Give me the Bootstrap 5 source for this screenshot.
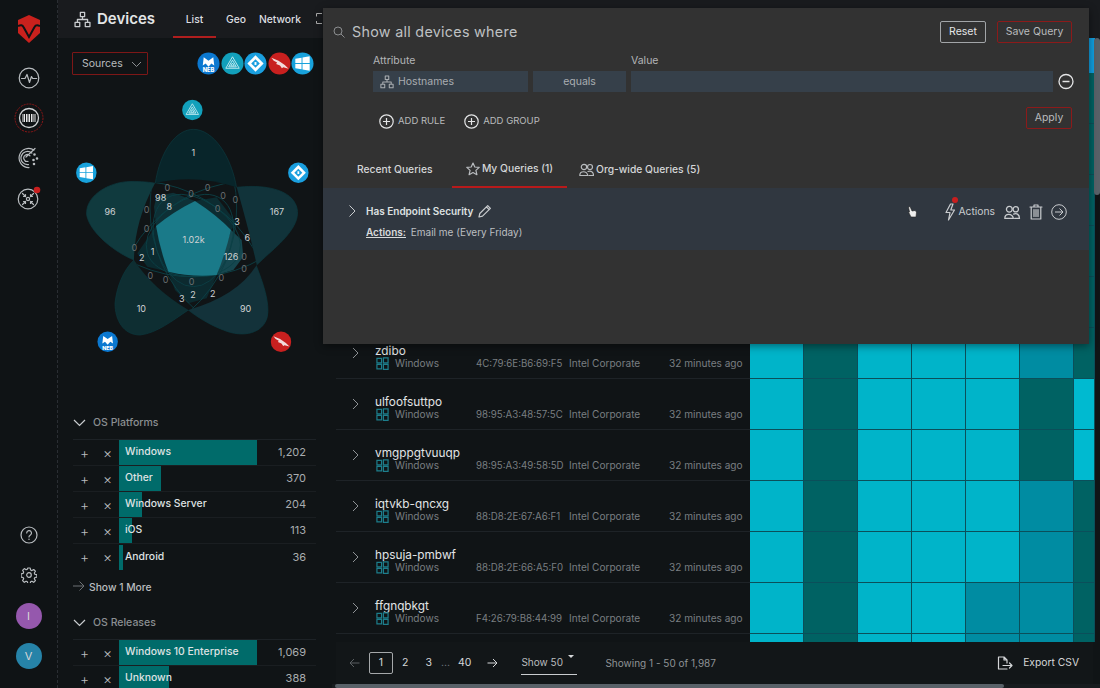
<!DOCTYPE html>
<html lang="en">
<head>
<meta charset="utf-8">
<title>Devices</title>
<link href="https://cdn.jsdelivr.net/npm/bootstrap@5.3.0/dist/css/bootstrap.min.css" rel="stylesheet">
<style>
html,body{height:688px;overflow:hidden;background:#101416;}
body{font-family:Inter,"Liberation Sans",sans-serif;font-size:11px;color:#c9cccf;}
.app{position:relative;width:1100px;height:688px;overflow:hidden;}
svg{display:block;flex:none;}
.ic{fill:none;stroke:currentColor;stroke-width:1.2;stroke-linecap:round;stroke-linejoin:round;}
.rail{width:58px;height:688px;background:#0f1315;border-right:1px dashed #2a2e33;padding-top:15px;flex:none;}
.rail-ic{height:40px;color:#b9bdc0;}
.rail-top{height:28px;margin-bottom:15px;}
.ava{width:26px;height:26px;border-radius:50%;color:#d8d8d8;font-size:11px;margin-top:14px;}
.ava-i{background:#9558ad;margin-top:8px;}
.ava-v{background:#2683a8;margin-bottom:19px;}
.side{width:274px;height:688px;flex:none;}
.side>*{flex:none;}
.topbar{height:38px;background:#191b1e;flex:none;}
.side-head{height:39px;}
.side-title{font-size:15px;font-weight:600;color:#e3e5e6;margin-left:6px;}
.tab-link{font-size:10.3px;font-weight:500;color:#dcdee0;height:38px;line-height:39px;text-align:center;}
.tab-on{width:43px;border-bottom:2px solid #b01e1e;margin-left:18px;margin-right:10px;}
.tab-gap{margin-left:13px;}
.srcbar{height:52px;padding:14px 18px 0 14px;}
.btn.srcbtn{width:76px;height:23px;border:1px solid #7d1717;border-radius:1px;color:#b9bcbf;font-size:10.5px;padding:1px 0 0 9px;}
.srcdot{width:23px;height:23px;margin-left:.5px;}
.venn{margin-left:2px;}
.venn text{font-family:Inter,"Liberation Sans",sans-serif;font-size:27px;fill:#d0d3d5;text-anchor:middle;}
.venn text.z{fill:#686d70;}
.spacer-a{height:44px;}
.sect{height:18px;padding-left:15px;color:#8b8f92;font-size:10.5px;font-weight:500;}
.sect svg{color:#c9cccf;margin-right:7px;}
.flist{margin:7px 16px 0 15px;border-top:1px solid #1d2226;}
.frow{height:26px;border-bottom:1px solid #1a1e21;}
.fbtn{width:23px;text-align:center;color:#b9bcbf;font-size:14px;line-height:24px;font-weight:300;}
.fbar{position:relative;flex:1;height:25px;}
.fill-bar{position:absolute;left:0;top:0;bottom:0;background:#006b6a;}
.fname{position:relative;padding-left:6px;line-height:23px;font-size:10.4px;color:#dfe2e3;font-weight:500;}
.fcount{width:49px;padding-right:10px;text-align:right;color:#a9adb0;font-size:11px;}
.more{padding:10px 0 0 15px;height:44px;color:#b9bcbf;font-size:10.3px;font-weight:500;}
.more svg{color:#6d7174;margin-right:4px;}
.main{width:768px;height:688px;flex:none;}
.tablewrap{height:604px;overflow:hidden;padding-left:4px;}
.trow{display:grid;grid-template-columns:414px 54px 54px 54px 54px 54px 54px 21px;height:51px;}
.trow.thead{height:35px;grid-template-columns:753px 6px;}
.thead i{background:#119fe0;grid-column:2;}
.tinfo{border-bottom:1px solid #1e2327;position:relative;padding:16px 0 0 39px;}
.chev{position:absolute;left:16px;top:19px;color:#8f9396;}
.hname{font-size:11.8px;line-height:14px;color:#e2e4e6;font-weight:400;}
.hsub{font-size:10.1px;line-height:13px;color:#797e81;margin-top:-1px;}
.hos{width:101px;}
.hos svg{margin:0 6px 0 1px;color:#1d7e8c;}
.hmac{width:93px;white-space:nowrap;font-size:9.7px;}
.hven{width:100px;white-space:nowrap;}
.cell{border-right:1px solid #0b4f5a;border-bottom:1px solid #0b4f5a;}
.hl{background:#00b4c9;}
.hd{background:#006263;}
.hm{background:#008ca2;}
.hb{background:#00bad0;}
.pager{height:42px;background:#121618;margin-left:4px;width:757px;padding-left:13px;color:#d5d7d9;font-size:10.5px;flex:none;}
.pg-on{width:24px;height:22px;border:1px solid #a5a8aa;border-radius:2px;margin-left:9px;}
.pg-n{margin-left:9px;}
.pg-ar{color:#5a5f62;}
.pg-sel{width:56px;height:23px;border-bottom:1px solid #c9cccf;margin-left:23px;color:#b9bcbf;font-size:10px;position:relative;}
.caret-mini{position:absolute;right:3px;top:3px;width:0;height:0;border:3px solid transparent;border-top-color:#d5d7d9;}
.pg-info{margin-left:28px;color:#8f9396;font-size:10px;}
.pg-exp{font-size:10.3px;margin-right:14px;}
.pg-exp svg{margin-right:10px;}
.hscroll-track{height:4px;background:#171b1e;padding-left:3px;flex:none;}
.hscroll{width:669px;height:4px;background:#596168;border-radius:2px;}
.vscroll{position:absolute;left:1094px;top:38px;width:6px;height:157px;background:#596168;border-radius:3px;}
.qpanel{position:absolute;left:323px;top:8px;width:766px;height:336px;background:#323232;box-shadow:0 2px 8px rgba(0,0,0,.45);}
.qhead{height:44px;padding:4px 17px 0 10px;flex:none;}
.qtitle{font-size:14.3px;color:#bfc1c3;margin-left:7px;letter-spacing:.3px;}
.btn.q-reset{width:46px;height:22px;border:1px solid #a2a5a8;border-radius:2px;color:#e4e5e6;font-size:10.5px;padding:0;}
.btn.q-save{height:22px;border:1px solid #8c1a1a;border-radius:2px;color:#b9bbbd;font-size:10.5px;padding:0;}
.q-s1{width:75px;margin-left:11px;}
.q-s2{width:46px;}
.qlabels{padding-left:50px;height:19px;color:#b3b5b7;font-size:10.5px;padding-top:1px;}
.qlab1{width:258px;}
.qfields{padding-left:50px;height:21px;gap:5px;}
.qf{height:21px;background:#36404a;color:#a9adb1;font-size:10.5px;}
.qf1{width:155px;padding-left:7px;}
.qf2{width:93px;}
.qf3{width:422px;}
.qmin{color:#e4e5e6;}
.qact{height:36px;margin-top:8px;padding:0 17px 0 56px;}
.qadd{color:#b9bbbd;font-size:9.5px;margin-right:19px;padding-top:6px;}
.qadd svg{margin-right:4px;color:#e4e5e6;}
.qtabs{height:50px;margin-top:2px;padding-left:34px;align-items:flex-end;}
.qt{height:38px;font-size:10.3px;font-weight:500;color:#d4d6d7;white-space:nowrap;padding-top:1px;}
.qt1{width:95px;}
.qt2{width:115px;border-bottom:2px solid #b81a1a;}
.qt3{margin-left:12px;}
.qt svg{margin-right:2px;color:#b9bcbf;}
.qrow{height:62px;background:#303740;position:relative;padding:16px 21px 0 43px;}
.qchev{position:absolute;left:25px;top:16px;color:#c9cccf;}
.qname{font-size:10px;font-weight:600;color:#dfe1e2;line-height:14px;}
.qname svg{margin-left:5px;color:#c9cccf;}
.qsub{font-size:10px;color:#bcbfc1;margin-top:7px;line-height:14px;}
.qsub u{font-weight:600;color:#d8dadb;margin-right:2px;}
.qtools{position:absolute;right:22px;top:15px;color:#c9cccf;font-size:10.3px;gap:8px;}
.qbolt{position:relative;margin-right:-6px;}
.qdot{position:absolute;left:8px;top:-6px;width:6px;height:6px;border-radius:50%;background:#c81e1e;}
.qcursor{position:absolute;left:584px;top:18px;}
.topstub{position:absolute;left:316px;top:13px;color:#aaa;}
</style>
</head>
<body>
<svg width="0" height="0" style="position:absolute">
 <defs>
  <symbol id="net" viewBox="0 0 16 16"><path class="ic" d="M6 1.200h4v4H6zM1 10.600h4.400v4H1zM10.600 10.600H15v4h-4.400zM8 5.200v2.800M3.200 10.600V8h9.600v2.600"/></symbol>
  <symbol id="winout" viewBox="0 0 14 14"><path fill="none" stroke="currentColor" stroke-width="1.300" d="M1 1.500h5v4.800H1zM8 1h5v5.300H8zM1 8h5v4.800H1zM8 8h5v5.300H8z"/></symbol>
  <symbol id="s-mb" viewBox="0 0 24 24"><circle cx="12" cy="12" r="11.500" fill="#0b78d0"/><path fill="#fff" d="M6 14l1-8.500 5 3.500 5-3.500 1 8.500-3-2-3 3.500L9 12z"/><text x="12" y="21" font-size="6" font-weight="800" text-anchor="middle" fill="#fff" font-family="Inter,sans-serif">NEB</text></symbol>
  <symbol id="s-tri" viewBox="0 0 24 24"><circle cx="12" cy="12" r="11.500" fill="#12a0bb"/><path fill="none" stroke="#bfe8ef" d="M12 5l7 12H5zM12 8.500l4 7H8zM12 11.500l1.800 3h-3.600z"/></symbol>
  <symbol id="s-dia" viewBox="0 0 24 24"><circle cx="12" cy="12" r="11.500" fill="#1a9fdf"/><path fill="#fff" d="M12 3.500l8.500 8.500-8.500 8.500L3.500 12z"/><path fill="#1a9fdf" d="M12 7.500l4.500 4.500-4.500 4.500L7.500 12z"/><path fill="#fff" d="M11 10.500h2v3h-2z"/></symbol>
  <symbol id="s-fal" viewBox="0 0 24 24"><circle cx="12" cy="12" r="11.500" fill="#c8201f"/><path fill="#f2dcdc" d="M3.500 6l7.500 3 6.500 4.500 4 4-5.500-1.500-1.500 1-2-3-4-1.500 1-1.500L6 9z"/></symbol>
  <symbol id="s-win" viewBox="0 0 24 24"><circle cx="12" cy="12" r="11.500" fill="#18a2dc"/><path fill="#fff" d="M4.500 7l6.500-1v5.500H4.500zM12 5.800L19.500 4.500v7H12zM4.500 12.500H11V18l-6.500-1zM12 12.500h7.500v7L12 18.200z"/></symbol>
  <clipPath id="ringclip"><path d="M285 280Q403 250 530 292Q570 432 590 525Q533 618 385 660Q277 595 222 510Q223 395 285 280z"/></clipPath>
 </defs>
</svg>

<div class="app d-flex">
 <nav class="rail d-flex flex-column align-items-center">
  <div class="rail-top">
   <svg width="22" height="28" viewBox="0 0 22 28"><path fill="#c9211d" d="M11 0l11 5v13l-11 10L0 18V5z"/><path fill="none" stroke="#0f1315" stroke-width="2" d="M0 11c3-1.500 4.500-1 5.500 1l5.500 10 5.500-10c1-2 2.500-2.500 5.500-1"/></svg>
  </div>
  <div class="rail-ic d-flex align-items-center"><svg width="22" height="22" viewBox="0 0 22 22" class="ic"><circle cx="11" cy="11" r="9.800"/><path d="M3.500 11.500h3.500l2-4 2.500 8 2-6 1.200 2h4"/></svg></div>
  <div class="rail-ic d-flex align-items-center"><svg width="30" height="30" viewBox="0 0 30 30"><circle cx="15" cy="15" r="14" fill="none" stroke="#8f1717" stroke-dasharray="2 1"/><circle cx="15" cy="15" r="9.500" fill="none" stroke="#d0d2d4" stroke-width="1.300"/><path stroke="#e6e7e8" d="M9 11v8M10.500 11v8M12.500 11v8M14 11v8M15.500 11v8M17.500 11v8M19 11v8M21 11v8" fill="none"/></svg></div>
  <div class="rail-ic d-flex align-items-center"><svg width="22" height="22" viewBox="0 0 22 22" class="ic"><path d="M16 3A9.600 9.600 0 1 0 11 20.600M13.800 6A6.600 6.600 0 1 0 10.500 17.600M12 8.800A3.500 3.500 0 1 0 10 14.400M8 10L17 1.500"/><circle cx="16.500" cy="7.500" r=".7"/><circle cx="19" cy="11.500" r=".7"/><circle cx="15.500" cy="13" r=".7"/><circle cx="16" cy="17" r=".7"/></svg></div>
  <div class="rail-ic d-flex align-items-center position-relative"><svg width="24" height="24" viewBox="0 0 24 24" class="ic"><circle cx="11" cy="13" r="9.800"/><circle cx="11" cy="13" r="1.600"/><path d="M5.500 7.500l3 3M8.500 8.500v2h-2M16.500 7.500l-3 3M13.500 8.500v2h2M5.500 18.500l3-3M8.500 17.500v-2h-2M16.500 18.500l-3-3M13.500 17.500v-2h2"/><circle cx="20" cy="4" r="3.300" fill="#c81e1e" stroke="none"/></svg></div>
  <div class="flex-grow-1"></div>
  <div class="rail-ic d-flex align-items-center"><svg width="18" height="18" viewBox="0 0 18 18" class="ic"><circle cx="9" cy="9" r="8"/><path d="M6.700 7a2.400 2.400 0 1 1 3.500 2.200C9.300 9.700 9 10.200 9 11M9 13.200v.2"/></svg></div>
  <div class="rail-ic d-flex align-items-center"><svg width="16" height="16" viewBox="0 0 16 16" class="ic"><circle cx="8" cy="8" r="2.300"/><path d="M6.800 1h2.400l.4 2 1.300.6 1.800-1.100 1.700 1.700-1.100 1.800.6 1.300 2 .4v2.400l-2 .4-.6 1.300 1.100 1.800-1.700 1.700-1.800-1.100-1.300.6-.4 2H6.800l-.4-2-1.300-.6-1.800 1.100-1.700-1.700 1.100-1.800-.6-1.300-2-.4V6.800l2-.4.600-1.300-1.100-1.800 1.700-1.700 1.800 1.100 1.300-.6z"/></svg></div>
  <div class="ava ava-i d-flex align-items-center justify-content-center flex-none">I</div>
  <div class="ava ava-v d-flex align-items-center justify-content-center flex-none">V</div>
 </nav>

 <aside class="side d-flex flex-column">
  <div class="topbar d-flex align-items-start ps-3">
   <div class="side-head d-flex align-items-center"><svg width="17" height="17"><use href="#net"/></svg><span class="side-title">Devices</span></div>
   <div class="tab-link tab-on">List</div>
   <div class="tab-link">Geo</div>
   <div class="tab-link tab-gap">Network</div>
   <svg class="topstub" width="6" height="11" viewBox="0 0 6 11"><path d="M6 .500H.500v3M.500 8v2.500H6" fill="none" stroke="#aaa"/></svg>
  </div>
  <div class="srcbar d-flex align-items-start justify-content-between">
   <button class="btn srcbtn d-flex align-items-center" type="button">Sources<svg class="ms-2" width="11" height="7" viewBox="0 0 11 7"><path d="M1 1l4.500 4.500L10 1" fill="none" stroke="#8b8e91"/></svg></button>
   <div class="d-flex align-items-center">
    <svg class="srcdot" viewBox="0 0 24 24"><use href="#s-mb"/></svg>
    <svg class="srcdot" viewBox="0 0 24 24"><use href="#s-tri"/></svg>
    <svg class="srcdot" viewBox="0 0 24 24"><use href="#s-dia"/></svg>
    <svg class="srcdot" viewBox="0 0 24 24"><use href="#s-fal"/></svg>
    <svg class="srcdot" viewBox="0 0 24 24"><use href="#s-win"/></svg>
   </div>
  </div>
  <svg class="venn" width="270" height="280" viewBox="0 0 810 840">
   <g stroke="#0c3a40" stroke-width="2">
    <path fill="#08252a" d="M285 285C300 180 350 118 400 118C460 118 515 200 530 295z"/>
    <path fill="#11333a" d="M530 292C590 285 660 290 695 325C730 365 710 410 660 460C640 480 610 505 590 525z"/>
    <path fill="#13323a" d="M588 525C610 580 630 640 622 680C610 730 550 745 490 720C450 705 410 680 385 660z"/>
    <path fill="#0e2e32" d="M385 660C340 690 290 730 240 735C190 735 165 690 165 640C170 590 190 540 222 510z"/>
    <path fill="#103a3e" d="M222 510C170 490 90 430 80 375C75 320 140 280 200 275C230 273 260 275 288 280z"/>
   </g>
   <path fill="#101416" d="M285 280Q403 250 530 292Q570 432 590 525Q533 618 385 660Q277 595 222 510Q223 395 285 280z"/>
   <g stroke="none">
    <path fill="#0e3036" d="M290 318L340 308 405 333 288 408 282 350z"/>
    <path fill="#16474f" d="M513 420L545 450 550 500 520 540 470 555z"/>
    <path fill="#0b2b30" d="M288 408L325 545 262 530 232 490z"/>
    <path fill="#0c2a2f" d="M325 545L470 555 440 625 385 640 345 600z"/>
    <path fill="#0c2c31" d="M405 333L470 322 530 400 513 420z"/>
   </g>
   <g clip-path="url(#ringclip)" fill="none" stroke="#0c4046" stroke-width="2.500">
    <ellipse cx="400" cy="354" rx="130" ry="236"/>
    <ellipse cx="400" cy="354" rx="130" ry="236" transform="rotate(72 400 445)"/>
    <ellipse cx="400" cy="354" rx="130" ry="236" transform="rotate(144 400 445)"/>
    <ellipse cx="400" cy="354" rx="130" ry="236" transform="rotate(216 400 445)"/>
    <ellipse cx="400" cy="354" rx="130" ry="236" transform="rotate(288 400 445)"/>
   </g>
   <path fill="#1a7a89" d="M405 333Q470 375 513 420Q495 495 470 555Q395 562 325 545Q300 480 288 408Q340 365 405 333z"/>
   <text x="400" y="198">1</text><text x="150" y="375">96</text><text x="651" y="375">167</text><text x="244" y="667">10</text><text x="557" y="667">90</text>
   <text x="401" y="459">1.02k</text><text x="302" y="333">98</text><text x="328" y="359">8</text><text x="531" y="406">3</text><text x="562" y="454">6</text><text x="513" y="510">126</text><text x="278" y="495">1</text><text x="245" y="514">2</text><text x="365" y="635">3</text><text x="399" y="623">2</text><text x="458" y="621">2</text>
   <text class="z" x="322" y="302">0</text><text class="z" x="393" y="320">0</text><text class="z" x="443" y="302">0</text><text class="z" x="489" y="328">0</text><text class="z" x="526" y="339">0</text><text class="z" x="473" y="366">0</text><text class="z" x="260" y="370">0</text><text class="z" x="260" y="425">0</text><text class="z" x="223" y="482">0</text><text class="z" x="271" y="567">0</text><text class="z" x="317" y="578">0</text><text class="z" x="395" y="586">0</text><text class="z" x="484" y="574">0</text><text class="z" x="552" y="546">0</text><text class="z" x="552" y="511">0</text>
   <svg x="365" y="28" width="64" height="64" viewBox="0 0 24 24"><use href="#s-tri"/></svg>
   <svg x="683" y="216" width="64" height="64" viewBox="0 0 24 24"><use href="#s-dia"/></svg>
   <svg x="47" y="216" width="64" height="64" viewBox="0 0 24 24"><use href="#s-win"/></svg>
   <svg x="111" y="723" width="64" height="64" viewBox="0 0 24 24"><use href="#s-mb"/></svg>
   <svg x="631" y="723" width="64" height="64" viewBox="0 0 24 24"><use href="#s-fal"/></svg>
  </svg>
  <div class="spacer-a"></div>
  <div class="sect d-flex align-items-center"><svg width="13" height="8" viewBox="0 0 13 8"><path d="M1 1l5.500 5.500L12 1" fill="none" stroke="currentColor" stroke-width="1.200"/></svg>OS Platforms</div>
  <div class="flist">
   <div class="frow d-flex align-items-center"><div class="fbtn">+</div><div class="fbtn">×</div><div class="fbar"><div class="fill-bar" style="width:138px"></div><div class="fname">Windows</div></div><div class="fcount">1,202</div></div>
   <div class="frow d-flex align-items-center"><div class="fbtn">+</div><div class="fbtn">×</div><div class="fbar"><div class="fill-bar" style="width:42px"></div><div class="fname">Other</div></div><div class="fcount">370</div></div>
   <div class="frow d-flex align-items-center"><div class="fbtn">+</div><div class="fbtn">×</div><div class="fbar"><div class="fill-bar" style="width:23px"></div><div class="fname">Windows Server</div></div><div class="fcount">204</div></div>
   <div class="frow d-flex align-items-center"><div class="fbtn">+</div><div class="fbtn">×</div><div class="fbar"><div class="fill-bar" style="width:13px"></div><div class="fname">iOS</div></div><div class="fcount">113</div></div>
   <div class="frow d-flex align-items-center border-0"><div class="fbtn">+</div><div class="fbtn">×</div><div class="fbar"><div class="fill-bar" style="width:4px"></div><div class="fname">Android</div></div><div class="fcount">36</div></div>
  </div>
  <div class="more d-flex align-items-start"><svg width="12" height="12" viewBox="0 0 12 12"><path d="M0 6h11M6.500 1.500L11 6l-4.500 4.500" fill="none" stroke="currentColor"/></svg>Show 1 More</div>
  <div class="sect d-flex align-items-center"><svg width="13" height="8" viewBox="0 0 13 8"><path d="M1 1l5.500 5.500L12 1" fill="none" stroke="currentColor" stroke-width="1.200"/></svg>OS Releases</div>
  <div class="flist">
   <div class="frow d-flex align-items-center"><div class="fbtn">+</div><div class="fbtn">×</div><div class="fbar"><div class="fill-bar" style="width:138px"></div><div class="fname">Windows 10 Enterprise</div></div><div class="fcount">1,069</div></div>
   <div class="frow d-flex align-items-center"><div class="fbtn">+</div><div class="fbtn">×</div><div class="fbar"><div class="fill-bar" style="width:50px"></div><div class="fname">Unknown</div></div><div class="fcount">388</div></div>
  </div>
 </aside>

 <main class="main d-flex flex-column">
  <div class="topbar"></div>
  <div class="tablewrap">
   <div class="trow thead"><i></i></div>
   <div class="trow"><div class="tinfo"></div><div class="cell hl"></div><div class="cell hd"></div><div class="cell hl"></div><div class="cell hl"></div><div class="cell hl"></div><div class="cell hm"></div><div class="cell hd"></div></div>
   <div class="trow"><div class="tinfo"></div><div class="cell hl"></div><div class="cell hd"></div><div class="cell hl"></div><div class="cell hl"></div><div class="cell hl"></div><div class="cell hm"></div><div class="cell hd"></div></div>
   <div class="trow"><div class="tinfo"></div><div class="cell hl"></div><div class="cell hd"></div><div class="cell hl"></div><div class="cell hl"></div><div class="cell hl"></div><div class="cell hm"></div><div class="cell hd"></div></div>
   <div class="trow"><div class="tinfo"></div><div class="cell hl"></div><div class="cell hd"></div><div class="cell hl"></div><div class="cell hl"></div><div class="cell hl"></div><div class="cell hm"></div><div class="cell hd"></div></div>
   <div class="trow"><div class="tinfo"></div><div class="cell hl"></div><div class="cell hd"></div><div class="cell hl"></div><div class="cell hl"></div><div class="cell hl"></div><div class="cell hm"></div><div class="cell hd"></div></div>

   <div class="trow"><div class="tinfo"><svg class="chev" width="7" height="12" viewBox="0 0 7 12"><path d="M1 1l5 5-5 5" fill="none" stroke="currentColor"/></svg><div class="hname">zdibo</div><div class="hsub d-flex"><div class="hos d-flex align-items-center"><svg width="13" height="13"><use href="#winout"/></svg>Windows</div><div class="hmac">4C:79:6E:B6:69:F5</div><div class="hven">Intel Corporate</div><div>32 minutes ago</div></div></div><div class="cell hl"></div><div class="cell hd"></div><div class="cell hl"></div><div class="cell hl"></div><div class="cell hl"></div><div class="cell hm"></div><div class="cell hd"></div></div>
   <div class="trow"><div class="tinfo"><svg class="chev" width="7" height="12" viewBox="0 0 7 12"><path d="M1 1l5 5-5 5" fill="none" stroke="currentColor"/></svg><div class="hname">ulfoofsuttpo</div><div class="hsub d-flex"><div class="hos d-flex align-items-center"><svg width="13" height="13"><use href="#winout"/></svg>Windows</div><div class="hmac">98:95:A3:48:57:5C</div><div class="hven">Intel Corporate</div><div>32 minutes ago</div></div></div><div class="cell hl"></div><div class="cell hd"></div><div class="cell hl"></div><div class="cell hl"></div><div class="cell hl"></div><div class="cell hd"></div><div class="cell hb"></div></div>
   <div class="trow"><div class="tinfo"><svg class="chev" width="7" height="12" viewBox="0 0 7 12"><path d="M1 1l5 5-5 5" fill="none" stroke="currentColor"/></svg><div class="hname">vmgppgtvuuqp</div><div class="hsub d-flex"><div class="hos d-flex align-items-center"><svg width="13" height="13"><use href="#winout"/></svg>Windows</div><div class="hmac">98:95:A3:49:58:5D</div><div class="hven">Intel Corporate</div><div>32 minutes ago</div></div></div><div class="cell hl"></div><div class="cell hd"></div><div class="cell hl"></div><div class="cell hl"></div><div class="cell hl"></div><div class="cell hd"></div><div class="cell hb"></div></div>
   <div class="trow"><div class="tinfo"><svg class="chev" width="7" height="12" viewBox="0 0 7 12"><path d="M1 1l5 5-5 5" fill="none" stroke="currentColor"/></svg><div class="hname">iqtvkb-qncxg</div><div class="hsub d-flex"><div class="hos d-flex align-items-center"><svg width="13" height="13"><use href="#winout"/></svg>Windows</div><div class="hmac">88:D8:2E:67:A6:F1</div><div class="hven">Intel Corporate</div><div>32 minutes ago</div></div></div><div class="cell hl"></div><div class="cell hd"></div><div class="cell hl"></div><div class="cell hl"></div><div class="cell hl"></div><div class="cell hm"></div><div class="cell hd"></div></div>
   <div class="trow"><div class="tinfo"><svg class="chev" width="7" height="12" viewBox="0 0 7 12"><path d="M1 1l5 5-5 5" fill="none" stroke="currentColor"/></svg><div class="hname">hpsuja-pmbwf</div><div class="hsub d-flex"><div class="hos d-flex align-items-center"><svg width="13" height="13"><use href="#winout"/></svg>Windows</div><div class="hmac">88:D8:2E:66:A5:F0</div><div class="hven">Intel Corporate</div><div>32 minutes ago</div></div></div><div class="cell hl"></div><div class="cell hd"></div><div class="cell hl"></div><div class="cell hl"></div><div class="cell hl"></div><div class="cell hm"></div><div class="cell hd"></div></div>
   <div class="trow"><div class="tinfo"><svg class="chev" width="7" height="12" viewBox="0 0 7 12"><path d="M1 1l5 5-5 5" fill="none" stroke="currentColor"/></svg><div class="hname">ffgnqbkgt</div><div class="hsub d-flex"><div class="hos d-flex align-items-center"><svg width="13" height="13"><use href="#winout"/></svg>Windows</div><div class="hmac">F4:26:79:B8:44:99</div><div class="hven">Intel Corporate</div><div>32 minutes ago</div></div></div><div class="cell hl"></div><div class="cell hd"></div><div class="cell hl"></div><div class="cell hl"></div><div class="cell hm"></div><div class="cell hm"></div><div class="cell hd"></div></div>
   <div class="trow"><div class="tinfo border-0"></div><div class="cell hl"></div><div class="cell hd"></div><div class="cell hl"></div><div class="cell hl"></div><div class="cell hm"></div><div class="cell hm"></div><div class="cell hd"></div></div>
  </div>
  <div class="pager d-flex align-items-center">
   <svg class="pg-ar" width="11" height="10" viewBox="0 0 11 10"><path d="M10.500 5H1M5 1L1 5l4 4" fill="none" stroke="currentColor"/></svg>
   <div class="pg-on d-flex align-items-center justify-content-center">1</div>
   <div class="pg-n">2</div><div class="pg-n" style="margin-left:17px">3</div><div class="pg-n text-secondary">…</div><div class="pg-n" style="margin-left:8px">40</div>
   <svg class="ms-3" width="11" height="10" viewBox="0 0 11 10"><path d="M.500 5H10M6 1l4 4-4 4" fill="none" stroke="currentColor"/></svg>
   <div class="pg-sel d-flex align-items-center">Show 50<span class="caret-mini"></span></div>
   <div class="pg-info">Showing 1 - 50 of 1,987</div>
   <div class="flex-grow-1"></div>
   <div class="pg-exp d-flex align-items-center"><svg width="16" height="14" viewBox="0 0 16 14"><path class="ic" d="M10 13H1.500V1H7l3 3v3M7 1v3h3M6 9.500h9M12.500 7l2.500 2.500L12.500 12"/></svg>Export CSV</div>
  </div>
  <div class="hscroll-track"><div class="hscroll"></div></div>
 </main>

 <div class="vscroll"></div>

 <section class="qpanel d-flex flex-column">
  <div class="qhead d-flex align-items-center">
   <svg width="12" height="12" viewBox="0 0 12 12"><circle cx="5" cy="5" r="4" fill="none" stroke="#8b8d8f"/><path d="M8 8l3.500 3.500" stroke="#8b8d8f"/></svg>
   <div class="qtitle flex-grow-1">Show all devices where</div>
   <button class="btn q-reset" type="button">Reset</button>
   <button class="btn q-save q-s1" type="button">Save Query</button>
  </div>
  <div class="qlabels d-flex"><div class="qlab1">Attribute</div><div>Value</div></div>
  <div class="qfields d-flex">
   <div class="qf qf1 d-flex align-items-center"><svg class="me-1" width="14" height="14"><use href="#net"/></svg>Hostnames</div>
   <div class="qf qf2 d-flex align-items-center justify-content-center">equals</div>
   <div class="qf qf3"></div>
   <svg class="qmin" width="16" height="21" viewBox="0 0 16 21"><circle cx="8" cy="10.500" r="7" fill="none" stroke="currentColor" stroke-width="1.300"/><path d="M4.500 10.500h7" stroke="currentColor" stroke-width="1.500"/></svg>
  </div>
  <div class="qact d-flex align-items-center">
   <div class="qadd d-flex align-items-center"><svg width="15" height="15" viewBox="0 0 15 15"><circle cx="7.500" cy="7.500" r="6.700" fill="none" stroke="currentColor" stroke-width="1.200"/><path d="M7.500 4v7M4 7.500h7" stroke="currentColor" stroke-width="1.200"/></svg>ADD RULE</div>
   <div class="qadd d-flex align-items-center"><svg width="15" height="15" viewBox="0 0 15 15"><circle cx="7.500" cy="7.500" r="6.700" fill="none" stroke="currentColor" stroke-width="1.200"/><path d="M7.500 4v7M4 7.500h7" stroke="currentColor" stroke-width="1.200"/></svg>ADD GROUP</div>
   <div class="flex-grow-1"></div>
   <button class="btn q-save q-s2" type="button">Apply</button>
  </div>
  <div class="qtabs d-flex">
   <div class="qt qt1 d-flex align-items-center">Recent Queries</div>
   <div class="qt qt2 d-flex align-items-center justify-content-center"><svg width="14" height="14" viewBox="0 0 14 14"><path class="ic" d="M7 1l1.800 4 4.400.4-3.300 3 1 4.300L7 10.500 3.100 12.700l1-4.300-3.300-3 4.400-.4z"/></svg>My Queries (1)</div>
   <div class="qt qt3 d-flex align-items-center"><svg width="15" height="14" viewBox="0 0 15 14"><g class="ic"><circle cx="5" cy="4" r="2.700"/><circle cx="11" cy="4" r="2.500"/><path d="M.8 12.500c0-5 7-5 8 0zM9 8.500c3-1.200 5.500.5 5.500 4H10"/></g></svg>Org-wide Queries (5)</div>
  </div>
  <div class="qrow">
   <svg class="qchev" width="9" height="14" viewBox="0 0 9 14"><path d="M1.500 1.500L7 7l-5.500 5.500" fill="none" stroke="currentColor"/></svg>
   <div class="qname d-flex align-items-center">Has Endpoint Security<svg width="14" height="14" viewBox="0 0 14 14"><path class="ic" d="M1 13l.8-3.500L9.700 1.600l2.700 2.700-7.900 7.900zM8.500 3l2.700 2.700"/></svg></div>
   <div class="qsub"><u>Actions:</u> Email me (Every Friday)</div>
   <svg class="qcursor" width="10" height="12" viewBox="0 0 10 12"><path fill="#eee" stroke="#222" stroke-width=".6" d="M1.500 1l1.500-.5L5 5l3-.5 1.500 1.500-.5 5H4L1.500 6l1 0z"/></svg>
   <div class="qtools d-flex align-items-center">
    <span class="qbolt"><svg width="12" height="18" viewBox="0 0 12 18"><path class="ic" d="M6.500 1L2 9.500h4L4.500 17 10.500 7H6.800L9 1z"/></svg><span class="qdot"></span></span>
    <span>Actions</span>
    <svg width="18" height="15" viewBox="0 0 15 14"><g class="ic"><circle cx="5" cy="4" r="2.700"/><circle cx="11" cy="4" r="2.500"/><path d="M.8 12.500c0-5 7-5 8 0zM9 8.500c3-1.200 5.500.5 5.500 4H10"/></g></svg>
    <svg width="14" height="16" viewBox="0 0 14 16"><path class="ic" d="M1 3h12M5 3V1h4v2M2.200 3v12h9.600V3M5 5.500v7M7 5.500v7M9 5.500v7"/></svg>
    <svg width="16" height="16" viewBox="0 0 16 16"><circle cx="8" cy="8" r="7.300" fill="none" stroke="currentColor"/><path d="M4 8h8M8.500 4.500L12 8l-3.500 3.500" fill="none" stroke="currentColor"/></svg>
   </div>
  </div>
 </section>
</div>
<script src="https://cdn.jsdelivr.net/npm/bootstrap@5.3.0/dist/js/bootstrap.bundle.min.js"></script>
</body>
</html>
